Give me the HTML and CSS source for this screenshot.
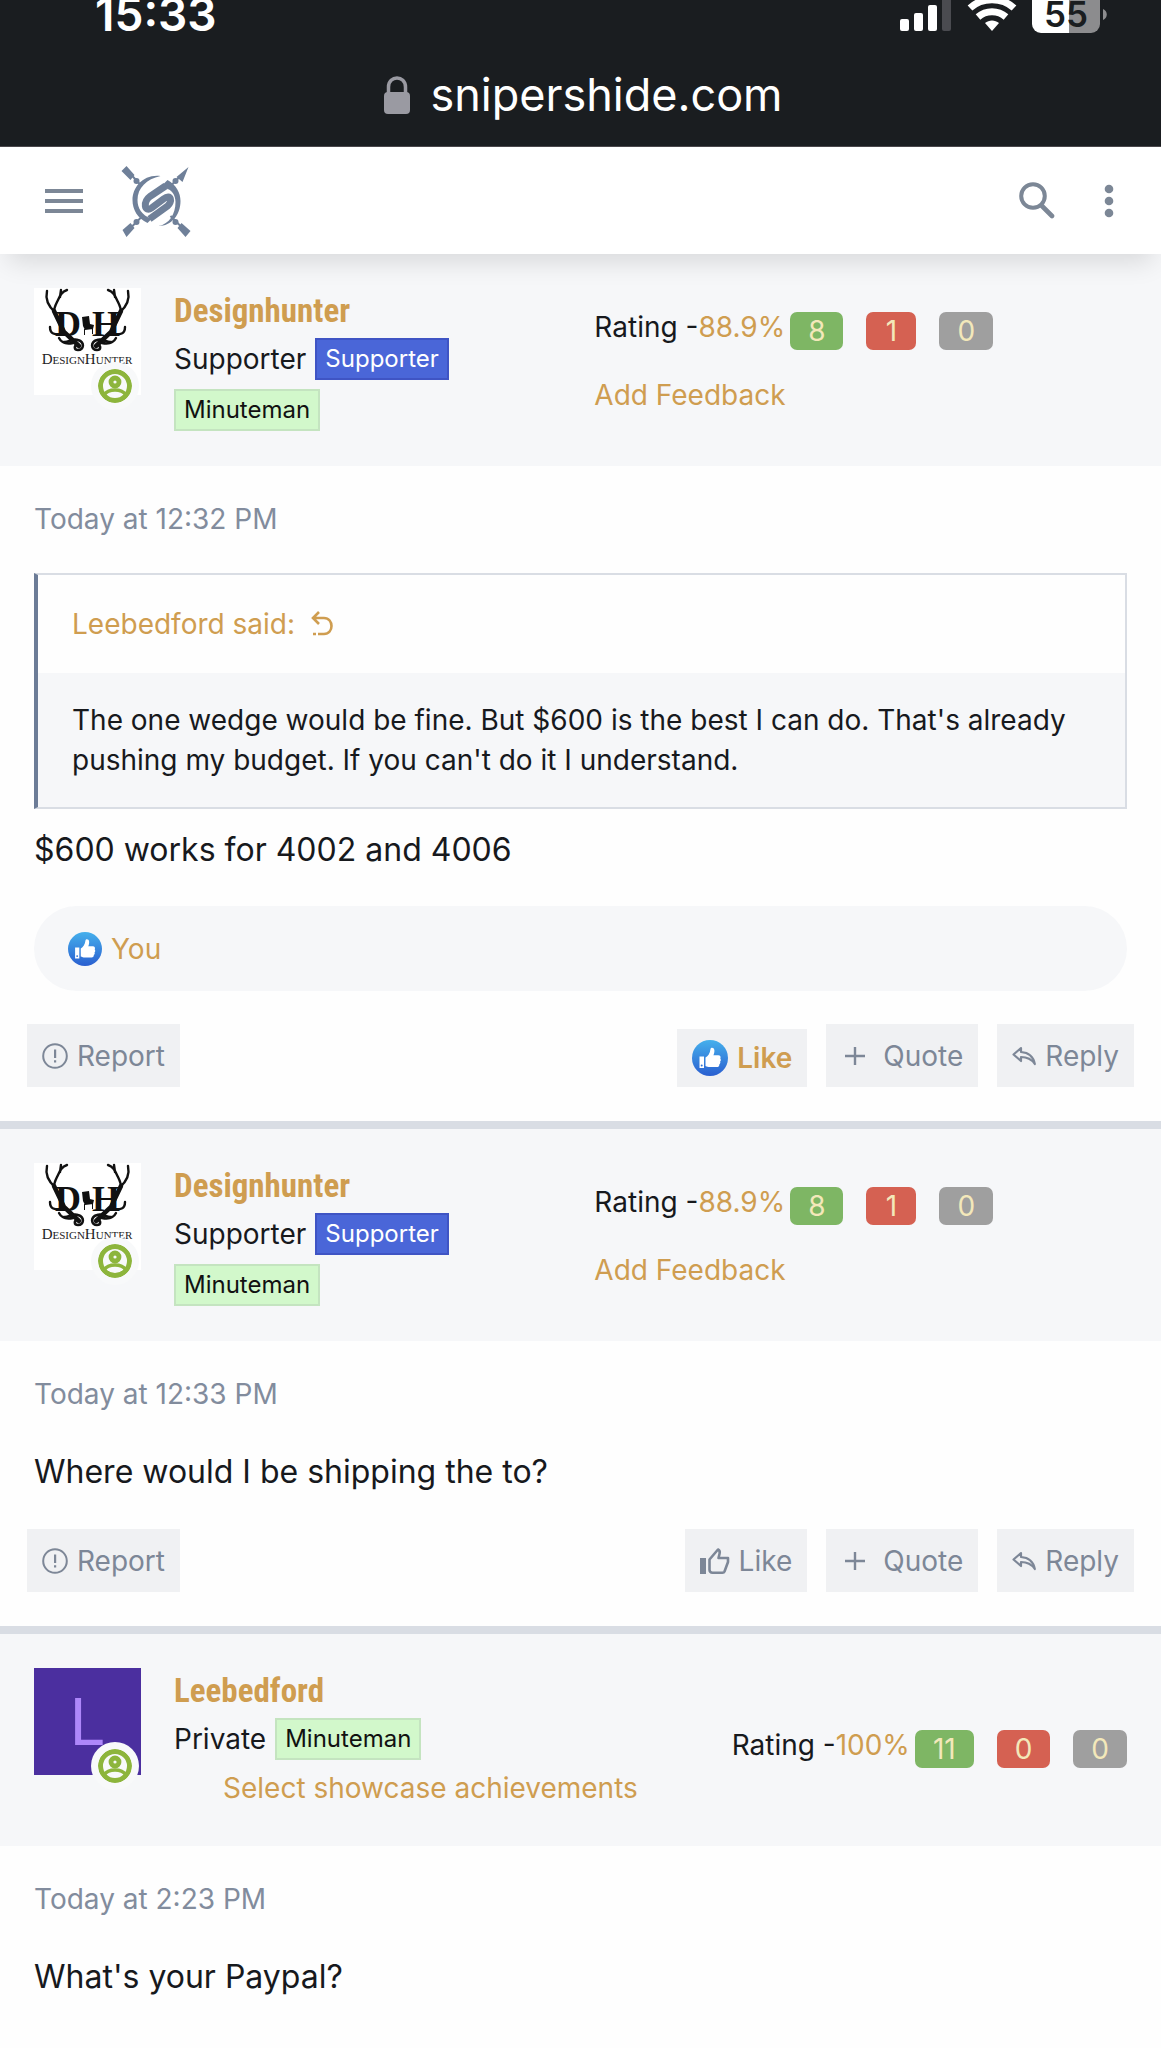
FILE: index.html
```
<!DOCTYPE html>
<html lang="en">
<head>
    <meta charset="UTF-8">
    <meta name="viewport" content="width=device-width, initial-scale=1.0">
    <title>Sniper's Hide</title>
    <link rel="stylesheet" href="styles.css">
</head>
<body>

    <!-- Shared icons -->
    <svg class="sprite" aria-hidden="true">
        <defs>
            <linearGradient id="like-gradient" x1="0" y1="0" x2="0" y2="1">
                <stop offset="0" stop-color="#45b0ec"/>
                <stop offset="1" stop-color="#2a5fd0"/>
            </linearGradient>
        </defs>
        <symbol id="icon-liked" viewBox="0 0 36 36">
            <circle cx="18" cy="18" r="18" fill="url(#like-gradient)"/>
            <path fill="#fff" d="M7.5 16.5h4.500v11.500H7.500zM13.500 17.500c2.500-1.500 4.500-4 5-8.500.3-2 3.700-1.800 3.900 1.200.1 2-.4 3.700-1 5h4.900c2 0 2.800 1.800 2 3.200.8 1 .7 2.300-.2 3.100.5 1.100.2 2.200-.8 2.900.2 1.400-.7 2.600-2.300 2.600H18c-2 0-3-.6-4.500-1.100z"/>
            <circle cx="9.700" cy="25.500" r="1" fill="#2f74d6"/>
        </symbol>
        <symbol id="icon-thumb" viewBox="0 0 30 28">
            <path fill="currentColor" d="M0 11h6v16H0z"/>
            <path fill="none" stroke="currentColor" stroke-width="2.600" stroke-linejoin="round" d="M9.500 12.500L18 2.500c1.800 1 2 2.500 1.600 4L18.500 11H28v4l-3.500 9.500c-.4 1-1 1.300-2 1.300h-10c-2 0-3-1.300-3-3z"/>
        </symbol>
        <symbol id="icon-report" viewBox="0 0 26 26">
            <circle cx="13" cy="13" r="11.800" fill="none" stroke="currentColor" stroke-width="2"/>
            <path fill="currentColor" d="M12 6.500h2.200v8.500H12zM12 17.200h2.200v2.300H12z"/>
        </symbol>
        <symbol id="icon-plus" viewBox="0 0 20 20">
            <path fill="none" stroke="currentColor" stroke-width="2.400" d="M10 1v18M0 10h20"/>
        </symbol>
        <symbol id="icon-reply" viewBox="0 0 24 20">
            <path fill="none" stroke="currentColor" stroke-width="2.200" stroke-linejoin="round" d="M9 2L1.500 8.500 9 15v-4c6 0 10.500 2 13.800 7C21.500 11 16.500 6.500 9 6z"/>
        </symbol>
        <symbol id="icon-online" viewBox="0 0 34 34">
            <circle cx="17" cy="17" r="14.500" fill="none" stroke="#8db53c" stroke-width="5"/>
            <circle cx="17" cy="13" r="4" fill="none" stroke="#8db53c" stroke-width="4.800"/>
            <path fill="none" stroke="#8db53c" stroke-width="3.600" d="M6 26c3-4.500 7-5 11-5s8 .5 11 5"/>
        </symbol>
        <symbol id="antlers" viewBox="0 0 107 107">
            <g id="antler" fill="none" stroke="#111" stroke-linecap="round">
                <path stroke-width="2.400" d="M13 3c-2 9 1 15 8 21M33 2c-6 2-7 6-10 12-2 4-3 6-3 10M26 9l1-7M16 39c0 7 4 8 14 7M25 50c3 6 9 6 14 5"/>
                <path stroke-width="4.500" d="M20 23l10 21 15 14"/>
                <path stroke-width="2.600" d="M30 54c4 1 8-4 14-2 7 2 6 10 0 10-4 0-4-4-1-5"/>
            </g>
            <use href="#antler" transform="translate(107 0) scale(-1 1)"/>
            <path fill="#111" d="M48 29l7-1 1 8 4 1-1 4-8 1-2-4zM50 41h1v6h-1zM58 41h1v5h-1z"/>
        </symbol>
    </svg>

    <!-- Browser chrome -->
    <div class="browser">
        <div class="status-bar">
            <span class="clock">15:33</span>
            <div class="status-icons">
                <svg width="38" height="33" viewBox="0 0 38 33">
                    <rect x="0" y="19" width="9" height="12" rx="2" fill="#fff"/>
                    <rect x="14" y="13" width="9" height="18" rx="2" fill="#fff"/>
                    <rect x="28" y="5" width="9" height="26" rx="2" fill="#fff"/>
                </svg>
                <svg class="signal-off" width="9" height="33" viewBox="0 0 9 33">
                    <rect x="0" y="-3" width="9" height="34" rx="2" fill="#4a4b50"/>
                </svg>
                <svg width="50" height="33" viewBox="0 0 50 33">
                    <g fill="none" stroke="#fff" stroke-width="7">
                        <path d="M3 8c12-11 32-11 44 0"/>
                        <path d="M11 17c8-7 20-7 28 0"/>
                    </g>
                    <path fill="#fff" d="M25 31l-7-8c4-3.500 10-3.500 14 0z"/>
                </svg>
                <span class="battery">55</span>
                <svg class="battery-tip" width="4" height="33" viewBox="0 0 4 33">
                    <path fill="#8c8c8e" d="M0 9c5 2 5 9 0 11z"/>
                </svg>
            </div>
        </div>
        <div class="address">
            <svg width="26" height="38" viewBox="0 0 26 38">
                <rect x="0" y="16" width="26" height="22" rx="4" fill="#9a9aa2"/>
                <path fill="none" stroke="#9a9aa2" stroke-width="3.500" d="M4.500 17v-6c0-12 17-12 17 0v6"/>
            </svg>
            <span>snipershide.com</span>
        </div>
    </div>

    <header class="site-header">
        <button class="icon-button" aria-label="Menu">
            <svg width="38" height="28" viewBox="0 0 38 28"><path fill="currentColor" d="M0 2h38v4H0zM0 12h38v4H0zM0 22h38v4H0z"/></svg>
        </button>
        <a href="#" class="logo" aria-label="Home">
            <svg width="70" height="72" viewBox="6 6 69 72">
                <g fill="#6f8099">
                    <path d="M11 7l8 9-4 5-9-9zM73 8l-6 15-6-5zM7 71l8-7 4 5-8 9zM66 64l9 8-5 6-8-9z"/>
                    <circle cx="21" cy="22" r="3"/><circle cx="60" cy="22" r="3"/>
                    <circle cx="21" cy="63" r="3"/><circle cx="60" cy="63" r="3"/>
                    <path d="M45 17C28 15 17 28 17 41c0 10 5 18 15 23l4-4c-10-4-14-11-14-19 0-12 9-21 23-24z"/>
                    <path d="M47 26l5-5c9 5 13 13 13 21 0 14-9 25-22 25 11-2 17-12 17-24 0-7-4-12-8-13z"/>
                </g>
                <path fill="none" stroke="#6f8099" stroke-width="2" d="M15 15l11 12M66 16L55 27M15 69l11-11M66 68L55 57"/>
                <path fill="none" stroke="#6f8099" stroke-width="7" d="M50 27L35 37c-8 6-6 17 1 12l12-9c8-6 9 3 4 7L34 60"/>
            </svg>
        </a>
        <button class="icon-button search" aria-label="Search">
            <svg width="36" height="38" viewBox="0 0 36 38">
                <circle cx="14" cy="14" r="11.800" fill="none" stroke="currentColor" stroke-width="4"/>
                <path fill="none" stroke="currentColor" stroke-width="4.600" stroke-linecap="round" d="M23 24l10 10"/>
            </svg>
        </button>
        <button class="icon-button" aria-label="More">
            <svg width="10" height="34" viewBox="0 0 10 34"><g fill="currentColor"><circle cx="5" cy="5" r="4.300"/><circle cx="5" cy="17" r="4.300"/><circle cx="5" cy="29" r="4.300"/></g></svg>
        </button>
    </header>

    <main>
        <article class="post">
            <div class="post-user post-user--wide">
                <a href="#" class="avatar">
                    <svg class="avatar-image" width="107" height="107" viewBox="0 0 107 107">
                        <use href="#antlers"/>
                        <text x="21" y="48" class="monogram">D</text>
                        <text x="58" y="48" class="monogram">H</text>
                        <text x="53" y="76" text-anchor="middle" class="brand"><tspan class="brand-cap">D</tspan>ESIGN<tspan class="brand-cap">H</tspan>UNTER</text>
                    </svg>
                    <svg class="online"><use href="#icon-online"/></svg>
                </a>
                <div class="identity">
                    <a href="#" class="username">Designhunter</a>
                    <div class="titles">Supporter <span class="banner banner--blue">Supporter</span> <span class="banner">Minuteman</span></div>
                </div>
                <div class="rating">
                    <div class="rating-row">
                        <span>Rating -<a href="#">88.9%</a></span>
                        <span class="score positive">8</span>
                        <span class="score negative">1</span>
                        <span class="score neutral">0</span>
                    </div>
                    <a href="#" class="add-feedback">Add Feedback</a>
                </div>
            </div>
            <div class="post-body">
                <time class="post-date">Today at 12:32 PM</time>
                <blockquote class="quote">
                    <a href="#" class="quote-title">Leebedford said:
                        <svg width="22" height="26" viewBox="0 0 22 26"><path fill="none" stroke="currentColor" stroke-width="2.600" d="M8 1L2 7l6 6M2 7h11c10 0 10 16 0 16H7M2 23h3"/></svg>
                    </a>
                    <p class="quote-text">The one wedge would be fine. But $600 is the best I can do. That's already pushing my budget. If you can't do it I understand.</p>
                </blockquote>
                <p class="message">$600 works for 4002 and 4006</p>
                <div class="reactions">
                    <svg width="34" height="34"><use href="#icon-liked"/></svg>
                    <a href="#">You</a>
                </div>
                <div class="actions">
                    <button class="action report"><svg width="26" height="26"><use href="#icon-report"/></svg>Report</button>
                    <button class="action liked"><svg width="36" height="36"><use href="#icon-liked"/></svg>Like</button>
                    <button class="action quote-button"><svg width="20" height="20"><use href="#icon-plus"/></svg>Quote</button>
                    <button class="action"><svg width="24" height="20"><use href="#icon-reply"/></svg>Reply</button>
                </div>
            </div>
        </article>

        <article class="post">
            <div class="post-user post-user--wide">
                <a href="#" class="avatar">
                    <svg class="avatar-image" width="107" height="107" viewBox="0 0 107 107">
                        <use href="#antlers"/>
                        <text x="21" y="48" class="monogram">D</text>
                        <text x="58" y="48" class="monogram">H</text>
                        <text x="53" y="76" text-anchor="middle" class="brand"><tspan class="brand-cap">D</tspan>ESIGN<tspan class="brand-cap">H</tspan>UNTER</text>
                    </svg>
                    <svg class="online"><use href="#icon-online"/></svg>
                </a>
                <div class="identity">
                    <a href="#" class="username">Designhunter</a>
                    <div class="titles">Supporter <span class="banner banner--blue">Supporter</span> <span class="banner">Minuteman</span></div>
                </div>
                <div class="rating">
                    <div class="rating-row">
                        <span>Rating -<a href="#">88.9%</a></span>
                        <span class="score positive">8</span>
                        <span class="score negative">1</span>
                        <span class="score neutral">0</span>
                    </div>
                    <a href="#" class="add-feedback">Add Feedback</a>
                </div>
            </div>
            <div class="post-body">
                <time class="post-date">Today at 12:33 PM</time>
                <p class="message">Where would I be shipping the to?</p>
                <div class="actions">
                    <button class="action report"><svg width="26" height="26"><use href="#icon-report"/></svg>Report</button>
                    <button class="action"><svg width="30" height="28"><use href="#icon-thumb"/></svg>Like</button>
                    <button class="action quote-button"><svg width="20" height="20"><use href="#icon-plus"/></svg>Quote</button>
                    <button class="action"><svg width="24" height="20"><use href="#icon-reply"/></svg>Reply</button>
                </div>
            </div>
        </article>

        <article class="post">
            <div class="post-user">
                <a href="#" class="avatar">
                    <span class="avatar-letter">L</span>
                    <svg class="online"><use href="#icon-online"/></svg>
                </a>
                <div class="identity">
                    <a href="#" class="username">Leebedford</a>
                    <div class="titles">Private <span class="banner">Minuteman</span></div>
                    <a href="#" class="showcase">Select showcase achievements</a>
                </div>
                <div class="rating">
                    <div class="rating-row">
                        <span>Rating -<a href="#">100%</a></span>
                        <span class="score positive">11</span>
                        <span class="score negative">0</span>
                        <span class="score neutral">0</span>
                    </div>
                </div>
            </div>
            <div class="post-body">
                <time class="post-date">Today at 2:23 PM</time>
                <p class="message">What's your Paypal?</p>
            </div>
        </article>
    </main>

</body>
</html>
```
FILE: styles.css
```
* {
    box-sizing: border-box;
}

body {
    margin: 0;
    background-color: #fefefe;
    color: #17191d;
    font-family: Inter, "Liberation Sans", sans-serif;
    font-size: 28px;
    line-height: 38px;
}

a {
    color: #cf9d50;
    text-decoration: none;
}

p, blockquote {
    margin: 0;
}

button {
    border: none;
    padding: 0;
    background: none;
    font: inherit;
    cursor: pointer;
}

svg {
    display: block;
    flex: none;
}

.sprite {
    position: absolute;
    width: 0;
    height: 0;
}

/* Browser chrome */
.browser {
    height: 147px;
    background-color: #1a1d20;
    border-bottom: 1px solid #4a474b;
    color: #fff;
}

.status-bar {
    display: flex;
    justify-content: space-between;
    height: 33px;
    padding: 0 54px 0 95px;
}

.clock {
    font-size: 46px;
    font-weight: 600;
    line-height: 28px;
}

.status-icons {
    display: flex;
}

.signal-off {
    margin: 0 16px 0 4px;
}

.battery {
    width: 68px;
    height: 33px;
    margin-left: 15px;
    border-radius: 0 0 9px 9px;
    background: linear-gradient(to right, #fff 55%, #8c8c8e 55%);
    color: #1a1d20;
    font-size: 35px;
    font-weight: 600;
    line-height: 28px;
    text-align: center;
}

.battery-tip {
    margin-left: 3px;
}

.address {
    display: flex;
    justify-content: center;
    align-items: center;
    gap: 20px;
    padding: 32px 0 0 6px;
    font-size: 45px;
    line-height: 60px;
}

/* Site header */
.site-header {
    position: relative;
    display: flex;
    align-items: center;
    height: 107px;
    padding: 0 47px 0 45px;
    background-color: #fff;
    box-shadow: 0 16px 24px -8px rgba(0, 0, 0, 0.12);
}

.icon-button {
    color: #7c8796;
}

.logo {
    margin-left: 38px;
}

.search {
    margin: 0 49px 0 auto;
}

/* Posts */
.post + .post {
    border-top: 8px solid #d9dde4;
}

.post-user {
    display: grid;
    grid-template-columns: 107px 1fr auto;
    column-gap: 33px;
    padding: 34px 34px 30px;
    background-color: #f6f7f9;
}

.post-user--wide {
    grid-template-columns: 107px 8fr 11fr;
}

.identity {
    min-height: 148px;
}

.avatar {
    position: relative;
    height: 107px;
}

.avatar-image {
    background-color: #fff;
}

.avatar-letter {
    display: block;
    height: 107px;
    background-color: #4b2f9f;
    color: #ae87fa;
    font-size: 64px;
    line-height: 107px;
    text-align: center;
}

.online {
    position: absolute;
    right: 2px;
    bottom: -15px;
    width: 48px;
    height: 48px;
    padding: 7px;
    border-radius: 50%;
    background-color: #f8f9fa;
}

.monogram {
    font: bold 36px "Liberation Serif", serif;
    fill: #111;
}

.brand {
    font: 11px "Liberation Serif", serif;
    fill: #222;
}

.brand-cap {
    font-size: 15px;
}

.username {
    display: block;
    font: bold 33px/46px "Roboto Condensed", Roboto, sans-serif;
}

.titles {
    display: flex;
    flex-wrap: wrap;
    gap: 9px;
    margin-top: 4px;
    line-height: 42px;
}

.showcase {
    display: block;
    margin-top: 4px;
    padding-left: 49px;
    line-height: 48px;
    white-space: nowrap;
}

.banner {
    padding: 0 8px;
    border: 2px solid #c4e4c0;
    background-color: #d2f8cb;
    color: #111;
    font-size: 24px;
    line-height: 38px;
}

.banner--blue {
    border-color: #3f54c4;
    background-color: #4a66d8;
    color: #fff;
}

.rating {
    align-self: center;
}

.rating-row {
    display: flex;
    align-items: flex-start;
    gap: 23px;
    padding-top: 10px;
}

.score {
    min-width: 50px;
    margin-top: 4px;
    padding: 0 18px;
    border-radius: 7px;
    color: #f3e8ba;
    text-align: center;
}

.positive {
    margin-left: -18px;
    background-color: #7eb664;
}

.negative {
    background-color: #d56152;
}

.neutral {
    background-color: #9f9f9f;
}

.add-feedback {
    display: block;
    margin: 26px 0 12px;
}

.post-body {
    padding: 34px;
}

.post-date {
    display: block;
    margin-bottom: 35px;
    color: #828c9d;
}

.quote {
    margin-bottom: 17px;
    border: 2px solid #d9dde4;
    border-left: 4px solid #6c7c97;
}

.quote-title {
    display: flex;
    align-items: center;
    gap: 16px;
    padding: 30px 34px;
}

.quote-text {
    padding: 27px 24px 27px 34px;
    background-color: #f6f7f9;
    line-height: 40px;
}

.message {
    font-size: 32px;
    line-height: 48px;
}

.reactions {
    display: flex;
    align-items: center;
    gap: 9px;
    height: 85px;
    margin-top: 32px;
    padding: 0 34px;
    border-radius: 43px;
    background-color: #f6f7f9;
}

.actions {
    display: flex;
    align-items: flex-end;
    gap: 19px;
    margin: 33px -7px 0;
}

.action {
    display: flex;
    align-items: center;
    gap: 9px;
    height: 63px;
    padding: 0 15px;
    background-color: #f0f1f3;
    color: #7d8797;
}

.report {
    margin-right: auto;
}

.liked {
    height: 58px;
    color: #cf9d50;
    font-weight: 600;
}

.quote-button {
    gap: 18px;
    padding-left: 19px;
}
```
